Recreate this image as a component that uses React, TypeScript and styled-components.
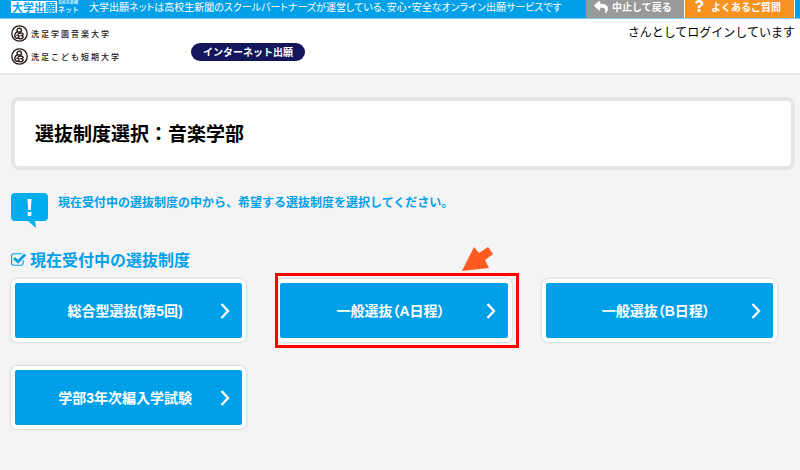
import React from "react";
import styled, { createGlobalStyle } from "styled-components";
import { FaQuestion, FaReply } from "react-icons/fa";

const GlobalStyle = createGlobalStyle`
  * { box-sizing: border-box; }
  body {
    margin: 0;
    background: #f4f4f4;
    color: #000;
    font-family: "Noto Sans CJK JP", sans-serif;
    font-size: 12px;
  }
  h1, h2, p, ul { margin: 0; padding: 0; }
  a { color: inherit; text-decoration: none; }
  svg { display: block; flex: none; }
`;

const TopBar = styled.div`
  display: flex;
  align-items: stretch;
  height: 19px;
  padding-right: 5px;
  background: #00a0e9;
  border-bottom: 1px solid #7fcff4;
  color: #fff;
`;

const Brand = styled.a`
  display: flex;
  flex: none;
  gap: 1px;
  width: 89px;
  padding-left: 11px;
  white-space: nowrap;
`;

const BrandMain = styled.strong`
  flex: none;
  height: 12px;
  margin-top: 1px;
  padding: 0 1px;
  background: #fff;
  color: #00a0e9;
  font-size: 11px;
  line-height: 13px;
`;

const BrandSub = styled.span`
  display: flex;
  flex-direction: column;
  font-size: 7px;
  font-weight: 500;
  line-height: 9px;
`;

const BrandNote = styled.small`
  font-size: 4px;
  line-height: 5px;
`;

const Tagline = styled.p`
  flex: 1;
  font-size: 10px;
  line-height: 14px;
  font-feature-settings: "palt";
  white-space: nowrap;
`;

const BarButton = styled.button<{ $color: string; $width: number; $gap: number }>`
  display: flex;
  align-items: flex-start;
  gap: ${(p) => p.$gap}px;
  width: ${(p) => p.$width}px;
  padding: 0 0 0 8px;
  border: 0;
  border-right: 1px solid #fff;
  background: ${(p) => p.$color};
  color: #fff;
  font: bold 10px/14px "Noto Sans CJK JP", sans-serif;
  white-space: nowrap;
`;

const Header = styled.header`
  display: flex;
  align-items: flex-start;
  height: 56px;
  padding: 6px 5px 0 11px;
  background: #fff;
  border-bottom: 2px solid #e6e6e6;
`;

const Schools = styled.ul`
  display: grid;
  gap: 6px;
  width: 180px;
  list-style: none;
`;

const School = styled.li`
  display: flex;
  align-items: center;
  gap: 3px;
  height: 17px;
  color: #231815;
  font-size: 8px;
  font-weight: 500;
  letter-spacing: 2px;
`;

const Pill = styled.span`
  margin-top: 18px;
  padding: 0 12px;
  border-radius: 9px;
  background: #14175c;
  color: #fff;
  font-size: 10px;
  font-weight: bold;
  line-height: 18px;
`;

const Login = styled.p`
  margin-left: auto;
  line-height: 14px;
`;

const Main = styled.main`
  padding: 22px 5px 24px 11px;
`;

const TitleCard = styled.div`
  padding: 19px 20px 21px;
  border: 4px solid #e5e5e5;
  border-radius: 8px;
  background: #fff;
`;

const Title = styled.h1`
  font-size: 19px;
  line-height: 25px;
`;

const Notice = styled.div`
  display: flex;
  gap: 10px;
  margin-top: 23px;
  color: #00a0e9;
  font-weight: bold;
  line-height: 18px;
`;

const SectionTitle = styled.h2`
  display: flex;
  align-items: center;
  gap: 4px;
  margin-top: 19px;
  color: #00a0e9;
  font-size: 16px;
  line-height: 24px;
`;

const Choices = styled.ul`
  display: grid;
  grid-template-columns: repeat(3, 1fr);
  gap: 24px 30px;
  margin: 8px 18px 0 0;
  list-style: none;
`;

const Choice = styled.li`
  position: relative;
`;

const ChoiceLink = styled.a`
  display: flex;
  align-items: center;
  height: 63px;
  padding: 0 12px 0 15px;
  border: 4px solid #fff;
  border-radius: 6px;
  background: #00a0e9;
  box-shadow: 0 0 3px rgba(0, 0, 0, 0.2);
  color: #fff;
  font-size: 14px;
  font-weight: bold;
  font-family: "Liberation Sans", "Noto Sans CJK JP", sans-serif;
  font-feature-settings: "palt";
`;

const ChoiceLabel = styled.span`
  flex: 1;
  padding-bottom: 2px;
  text-align: center;
`;

const Highlight = styled.span`
  position: absolute;
  inset: -6px -7px -6px -1px;
  border: 3px solid #f00;
  pointer-events: none;
`;

const Pointer = styled.svg`
  position: absolute;
  right: 18px;
  top: -33px;
`;

const Emblem = () => (
  <svg width="17" height="17" viewBox="0 0 34 34" fill="none" stroke="#231815" strokeLinecap="round" aria-hidden="true">
    <circle cx="17" cy="17" r="15.4" strokeWidth="2.6" />
    <g strokeWidth="2.8">
      <path d="M20 7c-4-2-8 0-8 3.500s3 4 6 3.500 4-3 2-5" />
      <path d="M12 14c-4 2-6 7-3 11 3 3 7 1 7-2s-3-4-4-2" />
      <path d="M15 17c4-2 10-1 9 2.500-1 2-3 2-5 2 4-1 6 1 5 3.500-1 3-6 3.500-9 1.500" />
    </g>
  </svg>
);

const Bubble = () => (
  <svg width="37" height="35" viewBox="0 0 37 35" aria-hidden="true">
    <path d="M4 0h29a4 4 0 0 1 4 4v20a4 4 0 0 1-4 4h-9l1 7-8-7H4a4 4 0 0 1-4-4V4a4 4 0 0 1 4-4z" fill="#00aeef" />
    <path d="M16.500 6h4l-.7 11h-2.600zM16.700 19h3.600v4h-3.600z" fill="#fff" />
  </svg>
);

const CheckSquare = () => (
  <svg width="15" height="13" viewBox="64 128 1664 1408" fill="currentColor" aria-hidden="true">
    <path d="M1472 930v318q0 119-84.500 203.500t-203.500 84.500h-832q-119 0-203.500-84.500t-84.500-203.500v-832q0-119 84.500-203.500t203.500-84.500h832q63 0 117 25 15 7 18 23 3 17-9 29l-49 49q-10 10-23 10-3 0-9-2-23-6-45-6h-832q-66 0-113 47t-47 113v832q0 66 47 113t113 47h832q66 0 113-47t47-113v-254q0-13 9-22l64-64q10-10 23-10 6 0 12 3 20 8 20 29zm231-489l-814 814q-24 24-57 24t-57-24l-430-430q-24-24-24-57t24-57l110-110q24-24 57-24t57 24l263 263 647-647q24-24 57-24t57 24l110 110q24 24 24 57t-24 57z" />
  </svg>
);

const Chevron = () => (
  <svg width="10" height="16" viewBox="0 0 10 16" fill="none" stroke="#fff" strokeWidth="2.4" aria-hidden="true">
    <path d="M1.500 1l6.500 7-6.500 7" />
  </svg>
);

const choices = [
  { label: "総合型選抜(第5回)" },
  { label: "一般選抜（A日程）", highlighted: true },
  { label: "一般選抜（B日程）" },
  { label: "学部3年次編入学試験" },
];

export default function App() {
  return (
    <>
      <GlobalStyle />
      <TopBar>
        <Brand href="#">
          <BrandMain>大学出願</BrandMain>
          <BrandSub>
            <BrandNote>高校生新聞</BrandNote>
            <span>ネット</span>
          </BrandSub>
        </Brand>
        <Tagline>
          大学出願ネットは高校生新聞のスクールパートナーズが運営している、安心・安全なオンライン出願サービスです
        </Tagline>
        <BarButton type="button" $color="#999" $width={99} $gap={4}>
          <FaReply size={14} />
          中止して戻る
        </BarButton>
        <BarButton type="button" $color="#f7931e" $width={110} $gap={6}>
          <FaQuestion size={12} />
          よくあるご質問
        </BarButton>
      </TopBar>
      <Header>
        <Schools>
          <School><Emblem />洗足学園音楽大学</School>
          <School><Emblem />洗足こども短期大学</School>
        </Schools>
        <Pill>インターネット出願</Pill>
        <Login>さんとしてログインしています</Login>
      </Header>
      <Main>
        <TitleCard>
          <Title>選抜制度選択：音楽学部</Title>
        </TitleCard>
        <Notice>
          <Bubble />
          <p>現在受付中の選抜制度の中から、希望する選抜制度を選択してください。</p>
        </Notice>
        <SectionTitle>
          <CheckSquare />
          現在受付中の選抜制度
        </SectionTitle>
        <Choices>
          {choices.map(({ label, highlighted }) => (
            <Choice key={label}>
              <ChoiceLink href="#">
                <ChoiceLabel>{label}</ChoiceLabel>
                <Chevron />
              </ChoiceLink>
              {highlighted && (
                <>
                  <Highlight />
                  <Pointer width="32" height="26" viewBox="0 0 32 26" aria-hidden="true">
                    <path d="M0 25L12 1l5 6 9-6 5 7-8 6 4 8z" fill="#ff5a1f" />
                  </Pointer>
                </>
              )}
            </Choice>
          ))}
        </Choices>
      </Main>
    </>
  );
}
